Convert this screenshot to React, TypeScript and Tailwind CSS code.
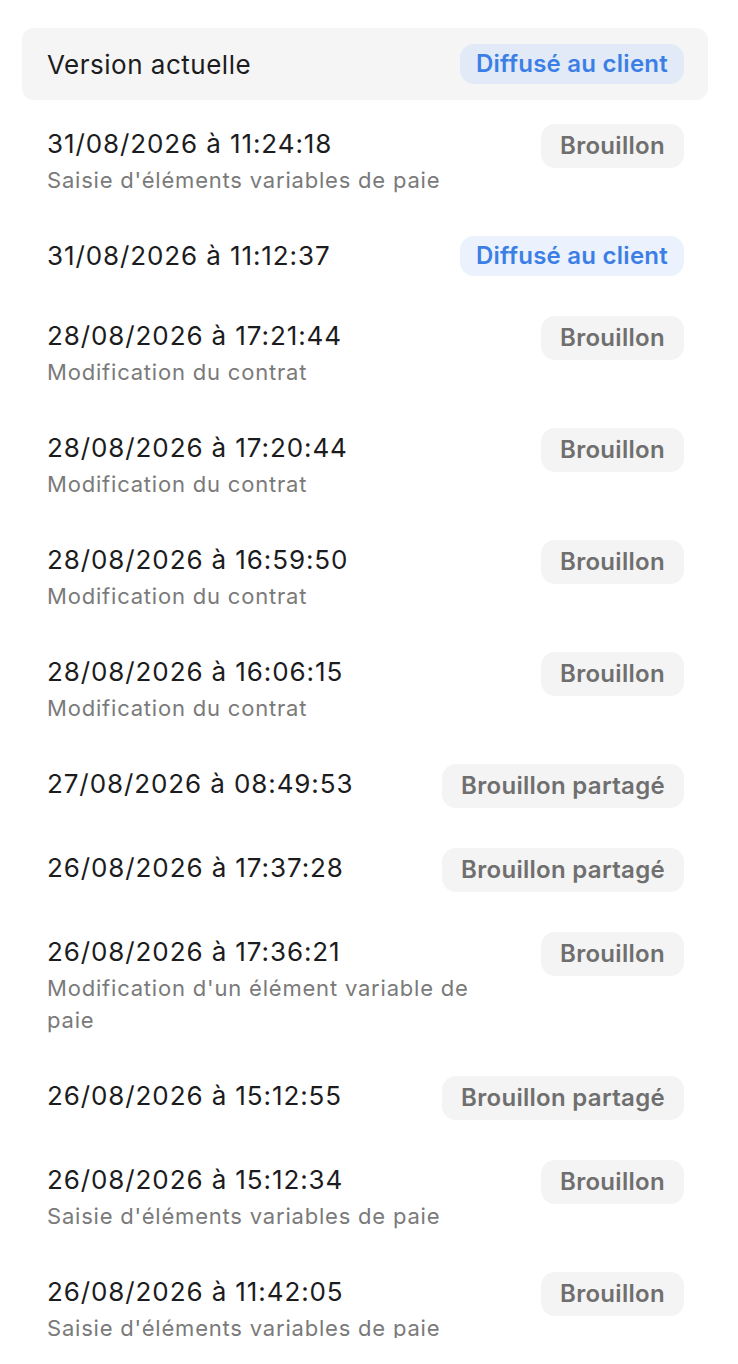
import React from "react";

type Status = "draft" | "shared" | "sent";

interface Version {
  date: string;
  note?: string;
  status: Status;
}

const versions: Version[] = [
  { date: "31/08/2026 à 11:24:18", note: "Saisie d'éléments variables de paie", status: "draft" },
  { date: "31/08/2026 à 11:12:37", status: "sent" },
  { date: "28/08/2026 à 17:21:44", note: "Modification du contrat", status: "draft" },
  { date: "28/08/2026 à 17:20:44", note: "Modification du contrat", status: "draft" },
  { date: "28/08/2026 à 16:59:50", note: "Modification du contrat", status: "draft" },
  { date: "28/08/2026 à 16:06:15", note: "Modification du contrat", status: "draft" },
  { date: "27/08/2026 à 08:49:53", status: "shared" },
  { date: "26/08/2026 à 17:37:28", status: "shared" },
  { date: "26/08/2026 à 17:36:21", note: "Modification d'un élément variable de paie", status: "draft" },
  { date: "26/08/2026 à 15:12:55", status: "shared" },
  { date: "26/08/2026 à 15:12:34", note: "Saisie d'éléments variables de paie", status: "draft" },
  { date: "26/08/2026 à 11:42:05", note: "Saisie d'éléments variables de paie", status: "draft" },
];

function Badge({ status, onGray }: { status: Status; onGray?: boolean }) {
  if (status === "sent") {
    return (
      <span
        className={
          "shrink-0 rounded-[14px] px-4 h-10 flex items-center text-[24px] tracking-[0.25px] font-semibold text-[#3b7fe6] " +
          (onGray ? "bg-[#e2eaf8]" : "bg-[#ebf2fe]")
        }
      >
        Diffusé au client
      </span>
    );
  }
  return (
    <span className="shrink-0 rounded-[14px] bg-[#f4f4f4] px-[19px] h-11 flex items-center text-[24px] tracking-[0.3px] font-semibold text-[#6f6f6f]">
      {status === "shared" ? "Brouillon partagé" : "Brouillon"}
    </span>
  );
}

export default function App() {
  return (
    <div
      className="h-[1364px] overflow-hidden bg-white"
      style={{ fontFamily: "Inter, 'Noto Sans', sans-serif" }}
    >
      <div className="h-[1338px] overflow-hidden pl-[22px] pr-[30px] pt-[28px]">
        <div className="flex h-[72px] items-center justify-between rounded-xl bg-[#f5f5f5] pl-[25px] pr-[24px]">
          <span className="text-[26px] tracking-[0.5px] text-[#1c1c1e]">Version actuelle</span>
          <Badge status="sent" onGray />
        </div>

        <div className="flex flex-col">
          {versions.map((v) => (
            <div
              key={v.date}
              className="flex items-start justify-between gap-6 pl-[25px] pr-[24px] pt-6 pb-4"
            >
              <div className="flex flex-col">
                <span className="text-[26px] leading-10 tracking-[0.9px] text-[#1c1c1e]">
                  {v.date}
                </span>
                {v.note && (
                  <span className="max-w-[440px] text-[22px] leading-8 tracking-[0.8px] text-[#7a7a7a]">
                    {v.note}
                  </span>
                )}
              </div>
              <Badge status={v.status} />
            </div>
          ))}
        </div>
      </div>
    </div>
  );
}
